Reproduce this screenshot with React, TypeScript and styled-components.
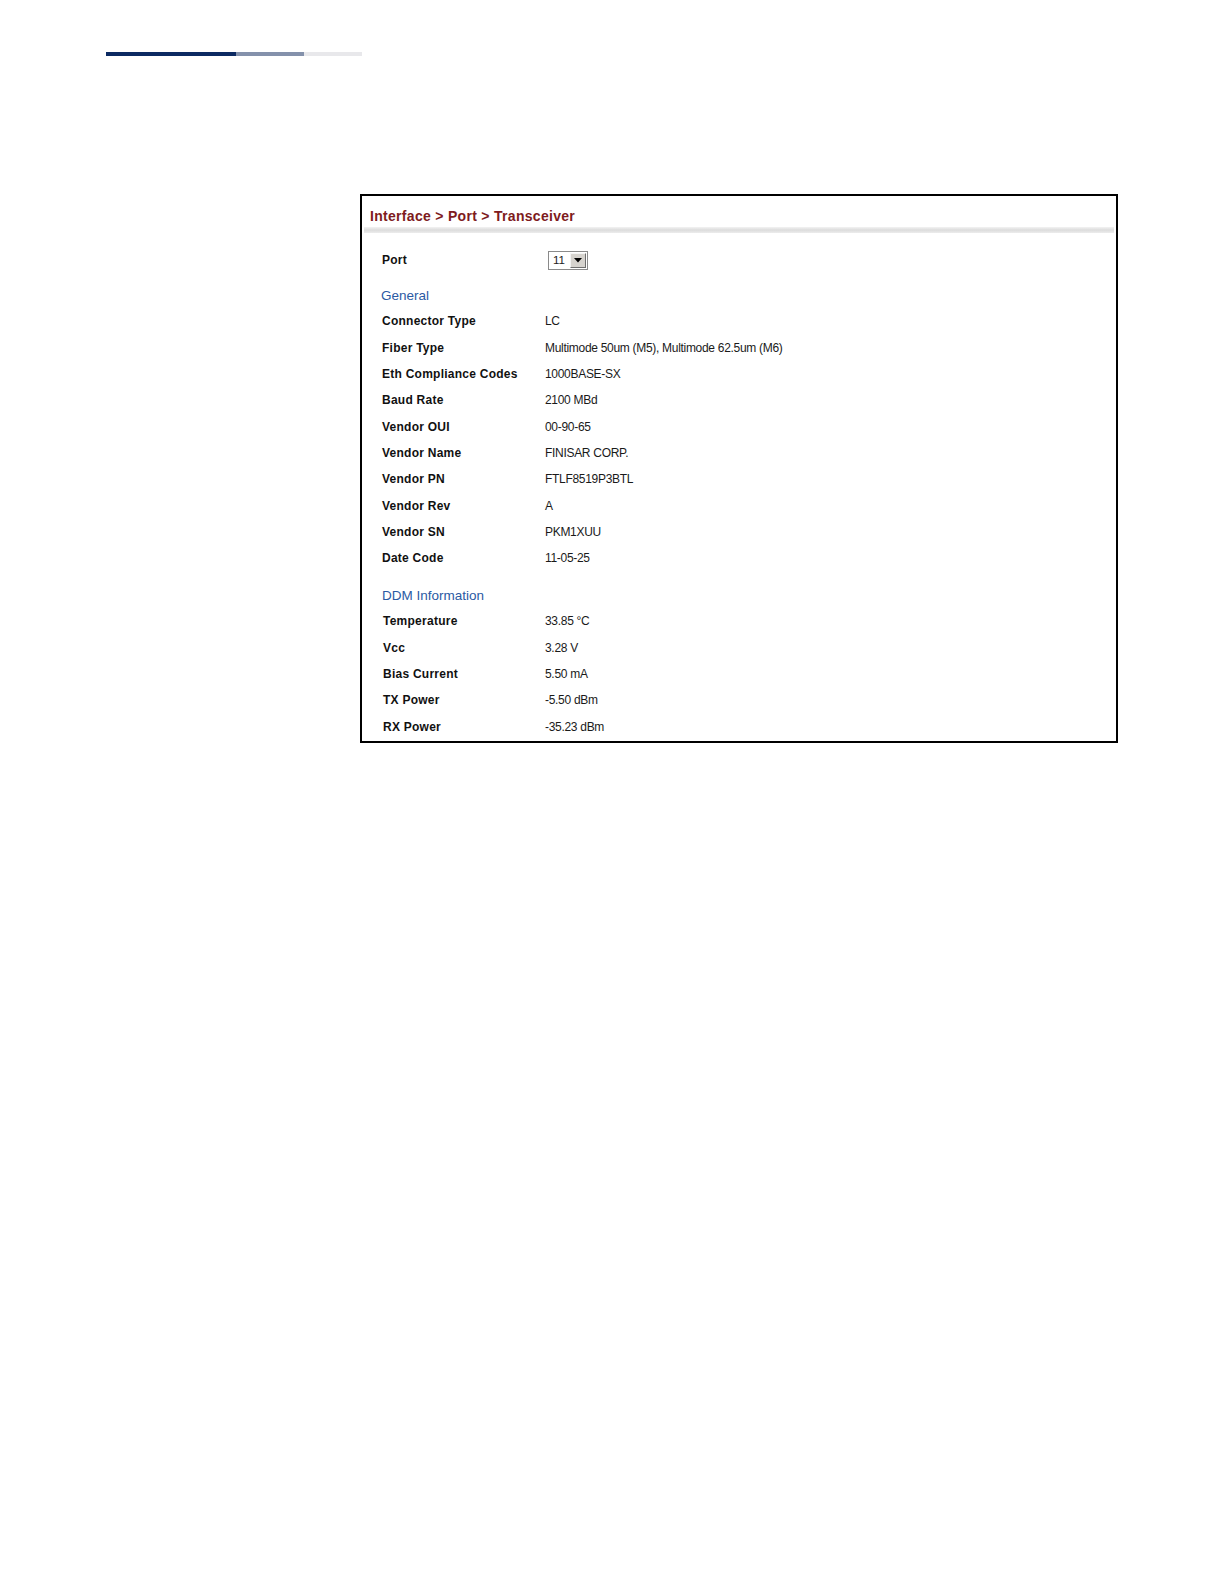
import React from "react";
import styled, { createGlobalStyle } from "styled-components";

const Global = createGlobalStyle`
  html, body { margin: 0; padding: 0; background: #ffffff; }
  body { font-family: "Liberation Sans", Arial, sans-serif; color: #000; }
`;

const Page = styled.div`
  width: 1224px;
  padding-top: 52px;
  box-sizing: border-box;
`;

const RuleBar = styled.div`
  margin-left: 106px;
  display: flex;
  height: 4px;
  width: 256px;
`;

const RuleSeg = styled.div<{ $w: number; $c: string }>`
  width: ${(p) => p.$w}px;
  height: 100%;
  background: ${(p) => p.$c};
`;

const Panel = styled.div`
  margin-top: 138px;
  margin-left: 360px;
  width: 758px;
  box-sizing: border-box;
  border: 2px solid #000;
  padding: 0 2px 1px 2px;
`;

const TitleRow = styled.div`
  height: 31px;
  display: flex;
  align-items: center;
  padding-left: 6px;
  padding-top: 9px;
  box-sizing: border-box;
  font-size: 14px;
  font-weight: bold;
  letter-spacing: 0.3px;
  color: #7e1b20;
`;

const TitleBar = styled.div`
  height: 6px;
  background: linear-gradient(#f3f3f3, #dcdcdc 50%, #ececec);
`;

const Body = styled.div`
  padding-left: 18px;
  padding-top: 14px;
`;

const Row = styled.div<{ $shift?: number }>`
  display: grid;
  grid-template-columns: 163px 1fr;
  height: 26.3px;
  align-items: center;
  padding-left: ${(p) => p.$shift || 0}px;
`;

const Label = styled.div`
  font-size: 12px;
  font-weight: bold;
  letter-spacing: 0.25px;
  color: #111;
`;

const Value = styled.div<{ $dx?: number }>`
  font-size: 12px;
  letter-spacing: -0.3px;
  color: #1a1a1a;
  margin-left: ${(p) => p.$dx || 0}px;
`;

const Heading = styled.div<{ $mt: number; $dx?: number }>`
  margin-top: ${(p) => p.$mt}px;
  height: 25px;
  display: flex;
  align-items: center;
  font-size: 13.5px;
  color: #2b5aa3;
  margin-left: ${(p) => p.$dx || 0}px;
`;

const SelectBox = styled.div`
  margin-left: 3px;
  width: 40px;
  height: 19px;
  box-sizing: border-box;
  border: 1px solid #8a8a8a;
  display: flex;
  align-items: stretch;
  background: #fff;
`;

const SelectText = styled.div`
  flex: 1;
  font-size: 11.5px;
  display: flex;
  align-items: center;
  padding-left: 4px;
  color: #222;
`;

const SelectBtn = styled.div`
  width: 16px;
  margin: 1px;
  background: #d6d3ce;
  border: 1px solid;
  border-color: #f4f4f4 #6e6e6e #6e6e6e #f4f4f4;
  box-sizing: border-box;
  display: flex;
  align-items: center;
  justify-content: center;
`;

const general: [string, string][] = [
  ["Connector Type", "LC"],
  ["Fiber Type", "Multimode 50um (M5), Multimode 62.5um (M6)"],
  ["Eth Compliance Codes", "1000BASE-SX"],
  ["Baud Rate", "2100 MBd"],
  ["Vendor OUI", "00-90-65"],
  ["Vendor Name", "FINISAR CORP."],
  ["Vendor PN", "FTLF8519P3BTL"],
  ["Vendor Rev", "A"],
  ["Vendor SN", "PKM1XUU"],
  ["Date Code", "11-05-25"],
];

const ddm: [string, string][] = [
  ["Temperature", "33.85 °C"],
  ["Vcc", "3.28 V"],
  ["Bias Current", "5.50 mA"],
  ["TX Power", "-5.50 dBm"],
  ["RX Power", "-35.23 dBm"],
];

export default function App() {
  return (
    <>
      <Global />
      <Page>
        <RuleBar>
          <RuleSeg $w={130} $c="#0c2a62" />
          <RuleSeg $w={68} $c="#8491ab" />
          <RuleSeg $w={58} $c="#e8e8eb" />
        </RuleBar>
        <Panel>
          <TitleRow>Interface &gt; Port &gt; Transceiver</TitleRow>
          <TitleBar />
          <Body>
            <Row>
              <Label>Port</Label>
              <SelectBox>
                <SelectText>11</SelectText>
                <SelectBtn>
                  <svg width="8" height="5" viewBox="0 0 8 5">
                    <polygon points="0,0 8,0 4,4.5" fill="#000" />
                  </svg>
                </SelectBtn>
              </SelectBox>
            </Row>
            <Heading $mt={10} $dx={-1}>General</Heading>
            {general.map(([l, v]) => (
              <Row key={l}>
                <Label>{l}</Label>
                <Value>{v}</Value>
              </Row>
            ))}
            <Heading $mt={12}>DDM Information</Heading>
            {ddm.map(([l, v]) => (
              <Row key={l} $shift={1}>
                <Label>{l}</Label>
                <Value $dx={-1}>{v}</Value>
              </Row>
            ))}
          </Body>
        </Panel>
      </Page>
    </>
  );
}
